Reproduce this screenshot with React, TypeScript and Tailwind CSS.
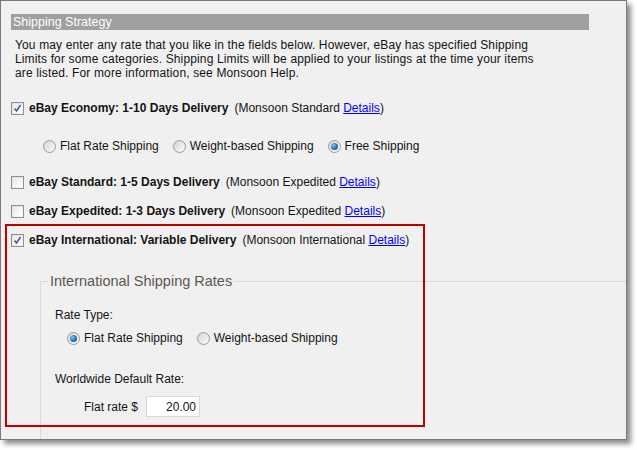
import React, { FC } from 'react';

const CheckBox: FC<{ checked?: boolean }> = ({ checked }) => {
  return (
    <span className="w-[13px] h-[13px] border border-[#8e8f8f] bg-gradient-to-br from-[#dcdcdc] to-[#fbfbfb] flex items-center justify-center shrink-0">
      <span className="w-[9px] h-[9px] bg-gradient-to-br from-[#e9e9e9] to-white flex items-center justify-center">
        {checked && (
          <svg width="9" height="9" viewBox="0 0 9 9">
            <path d="M1.5 4.5 L3.5 7 L7.5 1" fill="none" stroke="#4a57a6" strokeWidth="1.6" />
          </svg>
        )}
      </span>
    </span>
  );
};

const Radio: FC<{ checked?: boolean }> = ({ checked }) => {
  return (
    <span className="w-[13px] h-[13px] rounded-full border border-[#9a9a9a] bg-gradient-to-br from-[#d4d4d4] to-[#fdfdfd] flex items-center justify-center shrink-0">
      {checked && (
        <span className="w-[7px] h-[7px] rounded-full bg-[radial-gradient(circle_at_35%_35%,#7cc6f2,#1b6db3_60%,#0d4a86)]" />
      )}
    </span>
  );
};

const Option: FC<{ label: string; checked?: boolean }> = ({ label, checked }) => {
  return (
    <span className="flex items-center gap-[4px]">
      <Radio checked={checked} />
      <span>{label}</span>
    </span>
  );
};

const ServiceRow: FC<{ title: string; service: string; checked?: boolean; className?: string }> = ({
  title,
  service,
  checked,
  className,
}) => {
  return (
    <div className={`flex items-center h-[16px] ml-[10px] ${className}`}>
      <CheckBox checked={checked} />
      <span className="ml-[5px] font-bold">{title}</span>
      <span className="ml-[6px]">
        (Monsoon {service} <span className="text-[#0000ff] underline">Details</span>)
      </span>
    </div>
  );
};

const App: FC = () => {
  return (
    <div className="w-[637px] h-[450px] bg-white font-['Liberation_Sans',Arial,sans-serif] text-[12px] text-[#141414]">
      <div className="relative w-[627px] h-[440px] border border-[#7a7a7a] bg-[#f0f0f0] shadow-[4px_4px_5px_rgba(0,0,0,0.45)] overflow-hidden flex flex-col">
        <div className="mt-[13px] ml-[10px] w-[578px] h-[16px] bg-[#a0a0a0] text-white text-[12.5px] leading-[16px] pl-[2px]">
          Shipping Strategy
        </div>
        <p className="mt-[8px] ml-[14px] leading-[14px] tracking-[0.14px]">
          You may enter any rate that you like in the fields below. However, eBay has specified Shipping
          <br />
          Limits for some categories. Shipping Limits will be applied to your listings at the time your items
          <br />
          are listed. For more information, see Monsoon Help.
        </p>

        <ServiceRow className="mt-[20px]" title="eBay Economy: 1-10 Days Delivery" service="Standard" checked />
        <div className="mt-[22px] ml-[42px] h-[16px] flex items-center gap-[14px]">
          <Option label="Flat Rate Shipping" />
          <Option label="Weight-based Shipping" />
          <Option label="Free Shipping" checked />
        </div>
        <ServiceRow className="mt-[20px]" title="eBay Standard: 1-5 Days Delivery" service="Expedited" />
        <ServiceRow className="mt-[13px]" title="eBay Expedited: 1-3 Days Delivery" service="Expedited" />
        <ServiceRow className="mt-[13px]" title="eBay International: Variable Delivery" service="International" checked />

        <div className="relative mt-[33px] ml-[39px] flex-1 border-t border-l border-[#d3dbe3] pl-[14px] pt-[25px]">
          <span className="absolute -top-[10px] left-[7px] px-[2px] bg-[#f0f0f0] text-[14.5px] leading-[18px] text-[#5b5650]">
            International Shipping Rates
          </span>
          <div className="h-[16px] flex items-center">Rate Type:</div>
          <div className="mt-[7px] ml-[12px] h-[16px] flex items-center gap-[14px]">
            <Option label="Flat Rate Shipping" checked />
            <Option label="Weight-based Shipping" />
          </div>
          <div className="mt-[25px] h-[16px] flex items-center">Worldwide Default Rate:</div>
          <div className="mt-[9px] ml-[29px] h-[21px] flex items-center">
            <span>Flat rate $</span>
            <input
              readOnly
              value="20.00"
              className="ml-[8px] w-[54px] h-[21px] bg-white border border-[#d6dbe2] text-right pr-[3px] outline-none text-[#141414]"
            />
          </div>
        </div>

        <div className="absolute left-[4px] top-[223px] w-[420px] h-[203px] border-2 border-[#c00000] pointer-events-none" />
      </div>
    </div>
  );
};

export default App;
